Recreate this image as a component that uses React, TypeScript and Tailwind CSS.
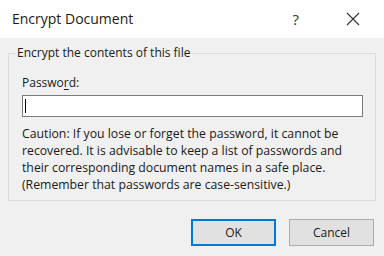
export default function App() {
  return (
    <div
      className="flex h-[256px] w-[384px] flex-col overflow-hidden bg-[#f0f0f0] text-[#000]"
      style={{ fontFamily: '"Open Sans", "Noto Sans", sans-serif' }}
    >
      {/* Title bar */}
      <div className="flex h-[38px] shrink-0 items-center bg-white">
        <span className="pl-[12px] text-[14px] leading-none text-[#1a1a1a]">Encrypt Document</span>
        <span className="ml-auto mr-[47px] text-[15px] leading-none text-[#333]">?</span>
        <svg width="14" height="14" viewBox="0 0 14 14" className="mr-[24px]">
          <path d="M1 1 L13 13 M13 1 L1 13" stroke="#333" strokeWidth="1.1" fill="none" />
        </svg>
      </div>

      {/* Body */}
      <div className="flex flex-1 flex-col px-[8px]">
        <fieldset className="mt-[7px] border border-[#dcdcdc] px-[13px] pb-[7px] pr-[12px]">
          <legend className="ml-[-6px] px-[1px] text-[12px] leading-[16px] text-[#1a1a1a]">
            Encrypt the contents of this file
          </legend>
          <div className="mt-[14px] text-[12px] leading-[16px] text-[#1a1a1a]">
            Passwo<span className="underline underline-offset-2">r</span>d:
          </div>
          <div className="mt-[4px] flex h-[22px] items-center border border-[#7a7a7a] bg-white pl-[2px]">
            <div className="h-[14px] w-px bg-black" />
          </div>
          <p className="mt-[8px] text-[12.25px] leading-[17px] text-[#1a1a1a]">
            Caution: If you lose or forget the password, it cannot be recovered. It is advisable to
            keep a list of passwords and their corresponding document names in a safe place.
            (Remember that passwords are case-sensitive.)
          </p>
        </fieldset>

        <div className="mt-[18px] flex justify-end gap-[13px] pr-[2px]">
          <button className="h-[27px] w-[85px] border-2 border-[#0078d7] bg-[#e1e1e1] text-[12px] text-[#1a1a1a]">
            OK
          </button>
          <button className="h-[27px] w-[85px] border border-[#adadad] bg-[#e1e1e1] text-[12px] text-[#1a1a1a]">
            Cancel
          </button>
        </div>
      </div>
    </div>
  );
}
